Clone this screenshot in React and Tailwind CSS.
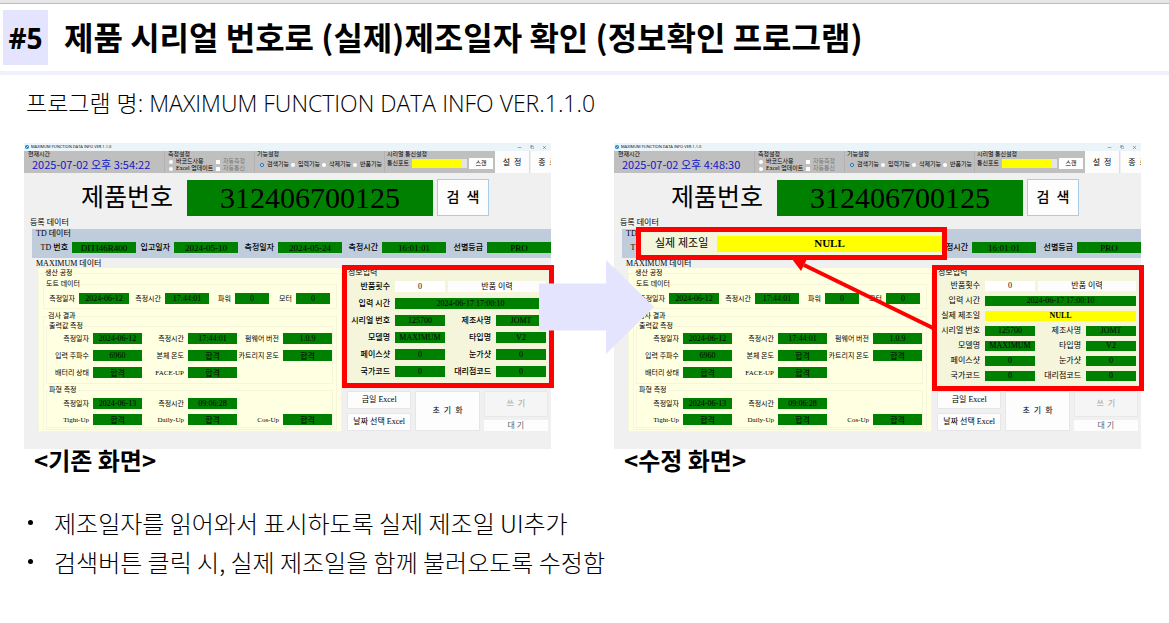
import { useId } from 'react';
import { Minus, Copy, X } from 'lucide-react';

const dotRow = [
  { label: '측정일자', value: '2024-06-12', labelWidth: 'w-[31px]', width: 'w-[50px]' },
  { label: '측정시간', value: '17:44:01', labelWidth: 'w-[32px]', width: 'w-[44px]' },
  { label: '파워', value: '0', labelWidth: 'w-[22px]', width: 'w-[34px]' },
  { label: '모터', value: '0', labelWidth: 'w-[23px]', width: 'w-[34px]' },
];

const outputRows = [
  ['측정일자', '2024-06-12'], ['측정시간', '17:44:01'], ['펌웨어 버전', '1.0.9'],
  ['입력 주파수', '6960'], ['본체 온도', '합격'], ['카트리지 온도', '합격'],
  ['배터리 상태', '합격'], ['FACE-UP', '합격'],
];

const waveRows = [
  ['측정일자', '2024-06-13'], ['측정시간', '09:06:28'], null,
  ['Tight-Up', '합격'], ['Daily-Up', '합격'], ['Cos-Up', '합격'],
];

const tdRow = [
  { label: 'TD 번호', value: 'DITI46R400', labelWidth: 'w-[32px]' },
  { label: '입고일자', value: '2024-05-10', labelWidth: 'w-[34px]' },
  { label: '측정일자', value: '2024-05-24', labelWidth: 'w-[36px]' },
  { label: '측정시간', value: '16:01:01', labelWidth: 'w-[36px]' },
  { label: '선별등급', value: 'PRO', labelWidth: 'w-[37px]' },
];

const infoPairs = [
  ['시리얼 번호', '125700', '제조사명', 'JOMT'],
  ['모델명', 'MAXIMUM', '타입명', 'V2'],
  ['페이스샷', '0', '눈가샷', '0'],
  ['국가코드', '0', '대리점코드', '0'],
];

export default function App() {
  return (
    <main className="min-h-screen bg-white text-black font-['Open_Sans','Noto_Sans_CJK_KR',sans-serif]">
      <div className="h-1 bg-[#e7e7e7] border-b border-[#bdbdbd]" />
      <header className="flex items-center h-[71px] pl-[3px] border-b-4 border-[#f0f0ff]">
        <span className="flex items-center justify-center w-[45px] h-[55px] bg-[#e4e4ff] text-[28px] font-bold">#5</span>
        <h1 className="ml-4 pb-1 text-[32px] leading-[40px] font-bold whitespace-nowrap font-['Noto_Sans_CJK_KR',sans-serif]">
          제품 시리얼 번호로 (실제)제조일자 확인 (정보확인 프로그램)
        </h1>
      </header>

      <p className="mt-[12px] pl-[26px] text-[23px] leading-[32px] font-light whitespace-nowrap">
        프로그램 명: MAXIMUM FUNCTION DATA INFO VER.1.1.0
      </p>

      <div className="relative grid grid-cols-2 gap-[63px] mt-[24px] pl-[24px] pr-[28px]">
        <Screen caption="<기존 화면>" time="2025-07-02 오후 3:54:22" />
        <Screen caption="<수정 화면>" time="2025-07-02 오후 4:48:30" updated />
        {/* Before → after arrow */}
        <svg className="absolute top-[117px] left-1/2 -ml-[46px] w-[115px] h-[94px]" viewBox="0 0 115 94" aria-hidden="true">
          <path d="M0 23.5H67V0L115 47L67 94V70.5H0Z" fill="#e4e4ff" />
        </svg>
      </div>

      <ul className="mt-[32px] pl-[26px] text-[24px] leading-[39px] font-light font-['Noto_Sans_CJK_KR',sans-serif]">
        <Bullet>제조일자를 읽어와서 표시하도록 실제 제조일 UI추가</Bullet>
        <Bullet>검색버튼 클릭 시, 실제 제조일을 함께 불러오도록 수정함</Bullet>
      </ul>
    </main>
  );
}

function Bullet({ children }) {
  return (
    <li className="flex items-center">
      <span className="w-[5px] h-[5px] ml-[2px] mr-[21px] rounded-full bg-black" />
      {children}
    </li>
  );
}

function Screen({ caption, time, updated }) {
  return (
    <figure className="relative min-w-0">
      <div className="h-[306px] overflow-hidden bg-[#f0f0f0] text-[8px] leading-[10px] whitespace-nowrap font-['Liberation_Serif','Noto_Sans_CJK_KR',serif]">
        <TitleBar />
        <Toolbar time={time} />

        <div className="flex items-center pt-[6px] pl-[57px]">
          <label className="flex items-center text-[25px] leading-[37px]">
            <span className="w-[106px]">제품번호</span>
            <input readOnly value="312406700125" className="w-[246px] h-[36px] bg-[#008000] text-center text-[30px]" />
          </label>
          <button className="ml-1 w-[52px] h-[37px] border border-[#a9cce8] bg-[#fdfdfd] text-[14px] font-medium">검&nbsp; 색</button>
        </div>

        <div className="mt-[2px] pl-[6px]">등록 데이터</div>
        <section className="mt-[1px] ml-[8px] pl-[4px] pb-[5px] bg-[#bfccdb]">
          <h2>TD 데이터</h2>
          <div className="flex mt-[3px]">
            {tdRow.map(f => <Field key={f.label} {...f} width="w-[64px]" textSize="text-[9px]" bold />)}
          </div>
        </section>

        <h2 className="mt-[1px] pl-[12px]">MAXIMUM 데이터</h2>
        <div className="flex -mt-[1px] pl-[14px] pr-[3px]">
          <MaximumData />
          <div className="flex-1 ml-[5px]">
            <InfoInput updated={updated} />
            <Actions />
          </div>
        </div>
      </div>
      <figcaption className="pl-[10px] text-[24px] leading-[22px] font-bold font-['Noto_Sans_CJK_KR',sans-serif]">{caption}</figcaption>

      {/* Red highlight around the input panel */}
      <div className={`absolute top-[122px] -right-[3px] w-[212px] border-[5px] border-[#ff0000] pointer-events-none ${updated ? 'h-[126px]' : 'h-[123px]'}`} />
      {updated && <Callout />}
    </figure>
  );
}

function Callout() {
  return (
    <>
      <label className="absolute top-[84px] left-[22px] flex items-center w-[311px] h-[33px] pl-[14px] border-[5px] border-[#ff0000] bg-[#f5f5dc] text-[11px] whitespace-nowrap font-['Liberation_Serif','Noto_Sans_CJK_KR',serif]">
        <span className="w-[62px]">실제 제조일</span>
        <input readOnly value="NULL" className="flex-1 min-w-0 h-[16px] bg-[#ffff00] text-center text-[11px] font-bold" />
      </label>
      <svg className="absolute top-[114px] left-[178px] w-[142px] h-[74px]" viewBox="0 0 142 74" aria-hidden="true">
        <path d="M141 71L12 8" stroke="#ff0000" strokeWidth="4" />
        <path d="M0 2L15 2L9 14Z" fill="#ff0000" />
      </svg>
    </>
  );
}

function TitleBar() {
  return (
    <div className="flex items-center h-[8px] pl-[1px] pr-[4px] bg-[#ebf4f9] text-[4px] leading-[8px] font-['Open_Sans',sans-serif]">
      <svg viewBox="0 0 10 10" className="w-[4px] h-[4px] mr-[2px]" aria-hidden="true">
        <circle cx="5" cy="5" r="5" fill="#1e83c4" />
        <path d="M3 7L7 3" stroke="#ffffff" strokeWidth="2" />
      </svg>
      MAXIMUM FUNCTION DATA INFO VER.1.1.0
      <div className="flex items-center gap-[8px] ml-auto text-gray-700">
        <Minus className="w-[5px] h-[5px]" />
        <Copy className="w-[4px] h-[4px]" />
        <X className="w-[5px] h-[5px]" />
      </div>
    </div>
  );
}

function Toolbar({ time }) {
  const id = useId();

  return (
    <div className="flex h-[22px] text-[6px] leading-[7px]">
      <div className="flex w-[471px] shrink-0 bg-[#bfbfbf]">
        <div className="w-[141px] pl-[4px] border-r border-[#b2b2b2]">
          <div>현재시간</div>
          <time className="block pl-[4px] text-[11px] leading-[13px] text-[#1414c8] font-['Noto_Sans_CJK_KR',sans-serif]">{time}</time>
        </div>
        <div className="w-[90px] pl-[3px] border-r border-[#b2b2b2]">
          <div>측정설정</div>
          <div className="grid grid-cols-[47px_39px] pl-[1px]">
            <Option type="radio" name={`${id}-mode`} label="바코드사용" />
            <Option type="checkbox" label="자동측정" muted />
            <Option type="radio" name={`${id}-mode`} label="Excel 업데이트" />
            <Option type="checkbox" label="자동통신" muted />
          </div>
        </div>
        <div className="w-[130px] pl-[2px] border-r border-[#b2b2b2]">
          <div>기능설정</div>
          <div className="grid grid-cols-4 pl-[3px] pt-[3px]">
            <Option type="radio" name={`${id}-func`} label="검색기능" checked />
            <Option type="radio" name={`${id}-func`} label="입력기능" />
            <Option type="radio" name={`${id}-func`} label="삭제기능" />
            <Option type="radio" name={`${id}-func`} label="반품기능" />
          </div>
        </div>
        <div className="pl-[2px]">
          <div>시리얼 통신설정</div>
          <div className="flex items-center">
            <label className="flex items-center">
              <span className="w-[25px]">통신포트</span>
              <select className="appearance-none w-[55px] h-[9px] bg-[#ffff00] border-r-[5px] border-[#e4e4e4]" />
            </label>
            <button className="ml-[2px] w-[24px] h-[11px] bg-[#fdfdfd]">스캔</button>
          </div>
        </div>
      </div>
      <button className="w-[35px] shrink-0 bg-[#fdfdfd] border-r border-[#dddddd] text-[8px]">설&nbsp; 정</button>
      <button className="w-[33px] shrink-0 bg-[#fdfdfd] ml-[1px] text-[8px]">종&nbsp; 료</button>
    </div>
  );
}

function Option({ type, name, label, checked, muted }) {
  return (
    <label className={`flex items-center gap-[3px] ${muted ? 'text-[#777777]' : ''}`}>
      <input
        type={type}
        name={name}
        defaultChecked={checked}
        className={`appearance-none w-[4px] h-[4px] shrink-0 bg-white checked:border checked:border-[#0067c0] ${type === 'radio' ? 'rounded-full' : ''}`}
      />
      {label}
    </label>
  );
}

function Field({ label, value, labelWidth, width, textSize, bold }) {
  return (
    <label className={`flex items-center shrink-0 ${bold ? 'font-medium' : ''}`}>
      <span className={`flex justify-end mr-[4px] ${labelWidth}`}>{label}</span>
      <Value value={value} width={width} textSize={textSize} />
    </label>
  );
}

function Value({ value, width = '', color = 'bg-[#008000]', height = 'h-[11px]', textSize = 'text-[8px]' }) {
  return <input readOnly value={value} className={`min-w-0 text-center ${textSize} ${height} ${width} ${color}`} />;
}

function Group({ title, className, children }) {
  return (
    <fieldset className={`min-w-0 border border-[#f5f5dc] ${className}`}>
      <legend className="ml-[1px] px-[1px]">{title}</legend>
      {children}
    </fieldset>
  );
}

function FieldGrid({ rows, className }) {
  return (
    <div className={`grid grid-cols-[95px_95px_1fr] ${className}`}>
      {rows.map((row, i) => row
        ? <Field key={i} label={row[0]} value={row[1]} labelWidth="w-[42px]" width="w-[49px]" />
        : <span key={i} />)}
    </div>
  );
}

function MaximumData() {
  return (
    <div className="w-[304px] shrink-0 bg-[#ffffe1] text-[7px] leading-[10px]">
      <Group title="생산 공정" className="px-[4px] pb-[1px]">
        <Group title="도트 데이터" className="mt-[1px] pt-[4px] pb-[4px]">
          <div className="flex">
            {dotRow.map(f => <Field key={f.label} {...f} />)}
          </div>
        </Group>
        <Group title="검사 결과" className="mt-[2px] pl-[2px] pr-[3px] pb-[1px]">
          <Group title="출력값 측정" className="pt-[2px] pb-[5px]">
            <FieldGrid rows={outputRows} className="gap-y-[6px]" />
          </Group>
          <Group title="파형 측정" className="mt-[1px] pt-[3px] pb-[2px]">
            <FieldGrid rows={waveRows} className="gap-y-[5px]" />
          </Group>
        </Group>
      </Group>
    </div>
  );
}

function InfoInput({ updated }) {
  const height = updated ? 'h-[10px]' : 'h-[11px]';
  const label = 'flex justify-end';
  return (
    <section className="h-[118px] pr-[2px] bg-[#f5f5dc]">
      <h3 className="pl-[1px]">정보입력</h3>
      <div className={`grid grid-cols-[43px_50px_41px_1fr] items-center gap-x-[5px] ${updated ? 'gap-y-[5px] pt-[3px]' : 'gap-y-[6px] pt-[3px] font-medium'}`}>
        <label className="contents">
          <span className={label}>반품횟수</span>
          <Value value="0" color="bg-white" height={height} />
        </label>
        <button className={`col-span-2 -ml-[2px] bg-[#fdfdfd] font-normal ${height}`}>반품 이력</button>
        <label className="contents">
          <span className={label}>입력 시간</span>
          <Value value="2024-06-17 17:00:10" width="col-span-3 w-full" height={height} />
        </label>
        {updated && (
          <label className="contents">
            <span className={label}>실제 제조일</span>
            <Value value="NULL" width="col-span-3 w-full font-bold" color="bg-[#ffff00]" height={height} />
          </label>
        )}
        {infoPairs.map(([l1, v1, l2, v2]) => (
          <div key={l1} className="contents">
            <label className="contents"><span className={label}>{l1}</span><Value value={v1} height={height} /></label>
            <label className="contents"><span className={label}>{l2}</span><Value value={v2} height={height} /></label>
          </div>
        ))}
      </div>
    </section>
  );
}

function Actions() {
  const btn = 'bg-[#fdfdfd] border border-[#e6e6e6] rounded-[1px]';
  return (
    <div className="grid grid-cols-3 gap-[4px] h-[40px] mt-[5px]">
      <div className="grid grid-rows-2 gap-[4px]">
        <button className={btn}>금일 Excel</button>
        <button className={btn}>날짜 선택 Excel</button>
      </div>
      <button className={btn}>초&nbsp; 기&nbsp; 화</button>
      <div className="flex flex-col gap-[3px]">
        <button disabled className="h-[26px] bg-[#f5f5f5] border border-[#e9e9e9] text-[#a0a0a0]">쓰&nbsp; 기</button>
        <button className="h-[11px] bg-[#fdfdfd] text-[#666666]">대 기</button>
      </div>
    </div>
  );
}
